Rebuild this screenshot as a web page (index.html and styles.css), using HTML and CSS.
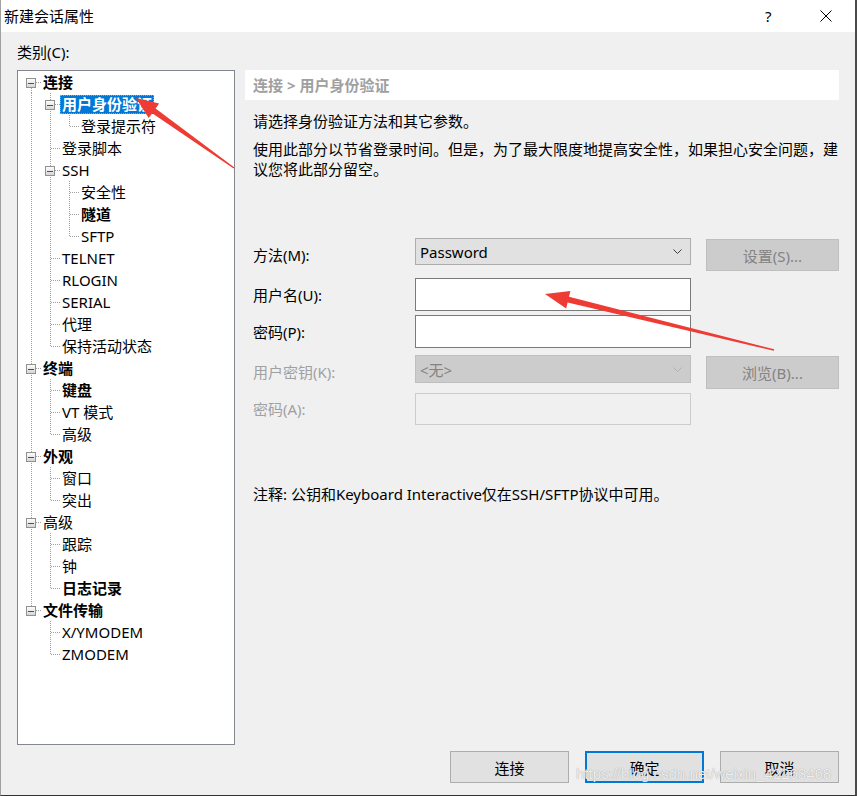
FILE: index.html
```
<!DOCTYPE html>
<html lang="zh-CN">
<head>
  <meta charset="UTF-8" />
  <title>新建会话属性</title>
  <link rel="stylesheet" href="styles.css">
</head>
<body>
  <div class="window">
    <div class="titlebar">
      <span class="title">新建会话属性</span>
      <span class="tb-help">?</span>
      <span class="tb-close">
        <svg width="12" height="12" viewBox="0 0 12 12"><path d="M0.5 0.5L11.5 11.5M11.5 0.5L0.5 11.5" stroke="#000" stroke-width="1" fill="none"/></svg>
      </span>
    </div>

    <div class="content">
      <div class="cat-label">类别(C):</div>

      <div class="main">
        <!-- Arbre des catégories -->
        <div class="tree">
          <div class="row"><span class="c first"><i class="box"></i></span><span class="lbl b">连接</span></div>
          <div class="row"><span class="g v"></span><span class="c tee"><i class="box"></i></span><span class="lbl b sel">用户身份验证</span></div>
          <div class="row"><span class="g v"></span><span class="g v"></span><span class="c end"></span><span class="lbl">登录提示符</span></div>
          <div class="row"><span class="g v"></span><span class="c tee"></span><span class="lbl">登录脚本</span></div>
          <div class="row"><span class="g v"></span><span class="c tee"><i class="box"></i></span><span class="lbl">SSH</span></div>
          <div class="row"><span class="g v"></span><span class="g v"></span><span class="c tee"></span><span class="lbl">安全性</span></div>
          <div class="row"><span class="g v"></span><span class="g v"></span><span class="c tee"></span><span class="lbl b">隧道</span></div>
          <div class="row"><span class="g v"></span><span class="g v"></span><span class="c end"></span><span class="lbl">SFTP</span></div>
          <div class="row"><span class="g v"></span><span class="c tee"></span><span class="lbl">TELNET</span></div>
          <div class="row"><span class="g v"></span><span class="c tee"></span><span class="lbl">RLOGIN</span></div>
          <div class="row"><span class="g v"></span><span class="c tee"></span><span class="lbl">SERIAL</span></div>
          <div class="row"><span class="g v"></span><span class="c tee"></span><span class="lbl">代理</span></div>
          <div class="row"><span class="g v"></span><span class="c end"></span><span class="lbl">保持活动状态</span></div>
          <div class="row"><span class="c tee"><i class="box"></i></span><span class="lbl b">终端</span></div>
          <div class="row"><span class="g v"></span><span class="c tee"></span><span class="lbl b">键盘</span></div>
          <div class="row"><span class="g v"></span><span class="c tee"></span><span class="lbl">VT 模式</span></div>
          <div class="row"><span class="g v"></span><span class="c end"></span><span class="lbl">高级</span></div>
          <div class="row"><span class="c tee"><i class="box"></i></span><span class="lbl b">外观</span></div>
          <div class="row"><span class="g v"></span><span class="c tee"></span><span class="lbl">窗口</span></div>
          <div class="row"><span class="g v"></span><span class="c end"></span><span class="lbl">突出</span></div>
          <div class="row"><span class="c tee"><i class="box"></i></span><span class="lbl">高级</span></div>
          <div class="row"><span class="g v"></span><span class="c tee"></span><span class="lbl">跟踪</span></div>
          <div class="row"><span class="g v"></span><span class="c tee"></span><span class="lbl">钟</span></div>
          <div class="row"><span class="g v"></span><span class="c end"></span><span class="lbl b">日志记录</span></div>
          <div class="row"><span class="c end"><i class="box"></i></span><span class="lbl b">文件传输</span></div>
          <div class="row"><span class="g"></span><span class="c tee"></span><span class="lbl">X/YMODEM</span></div>
          <div class="row"><span class="g"></span><span class="c end"></span><span class="lbl">ZMODEM</span></div>
        </div>

        <!-- Panneau de droite -->
        <div class="panel">
          <div class="crumb">连接 &gt; 用户身份验证</div>
          <p class="intro">请选择身份验证方法和其它参数。</p>
          <p class="desc">使用此部分以节省登录时间。但是，为了最大限度地提高安全性，如果担心安全问题，建议您将此部分留空。</p>

          <div class="form">
            <div class="frow r1">
              <label>方法(M):</label>
              <div class="select">
                <span>Password</span>
                <svg width="9" height="5" viewBox="0 0 9 5"><path d="M0.5 0.5L4.5 4.5L8.5 0.5" stroke="#404040" fill="none"/></svg>
              </div>
              <button class="side-btn" disabled>设置(S)...</button>
            </div>
            <div class="frow r2">
              <label>用户名(U):</label>
              <div class="textbox"></div>
            </div>
            <div class="frow r3">
              <label>密码(P):</label>
              <div class="textbox"></div>
            </div>
            <div class="frow r4 off">
              <label>用户密钥(K):</label>
              <div class="select">
                <span>&lt;无&gt;</span>
                <svg width="9" height="5" viewBox="0 0 9 5"><path d="M0.5 0.5L4.5 4.5L8.5 0.5" stroke="#b0b0b0" fill="none"/></svg>
              </div>
              <button class="side-btn" disabled>浏览(B)...</button>
            </div>
            <div class="frow r5 off">
              <label>密码(A):</label>
              <div class="textbox"></div>
            </div>
          </div>

          <p class="note">注释: 公钥和Keyboard Interactive仅在SSH/SFTP协议中可用。</p>
        </div>
      </div>

      <div class="footer">
        <button class="dbtn">连接</button>
        <button class="dbtn default">确定</button>
        <button class="dbtn">取消</button>
      </div>
    </div>

    <div class="watermark">https://blog.csdn.net/weixin_42263468</div>

    <!-- Flèches rouges d'annotation -->
    <svg class="arrows" width="857" height="796" viewBox="0 0 857 796">
      <polygon points="234.4,167.4 155.6,108.4 159.1,103.5 136,98 148.7,118.1 152.2,113.2 233.6,168.6" fill="#ee3b34"/>
      <polygon points="774.2,349.3 569.0,296.8 570.4,291.0 545,294 566.2,308.4 567.6,302.6 773.8,350.7" fill="#ee3b34"/>
    </svg>
  </div>
</body>
</html>
```

FILE: styles.css
```
body {
  margin: 0;
  font-family: "Noto Sans", "Noto Sans CJK SC", sans-serif;
  font-size: 15px;
  color: #000;
  background: #f0f0f0;
}
.window {
  position: relative;
  width: 857px;
  height: 796px;
  box-sizing: border-box;
  border-left: 1px solid #a0a0a0;
  border-right: 2px solid #4a4a4a;
  border-bottom: 1px solid #333;
  background: #f0f0f0;
  display: flex;
  flex-direction: column;
}
.titlebar {
  height: 32px;
  background: white;
  display: flex;
  align-items: center;
  padding-left: 3px;
}
.title {
  flex: 1;
  line-height: 20px;
}
.tb-help {
  width: 9px;
  margin-right: 46px;
  line-height: 20px;
}
.tb-close {
  display: flex;
  margin-right: 23px;
}
.content {
  flex: 1;
  display: flex;
  flex-direction: column;
  padding: 0 16px;
}
.cat-label {
  height: 38px;
  box-sizing: border-box;
  padding-top: 10px;
  line-height: 20px;
}
.main {
  display: flex;
  height: 675px;
}
/* Tree */
.tree {
  --dot-v: repeating-linear-gradient(to bottom, #a0a0a0 0 1px, transparent 1px 2px);
  --dot-h: repeating-linear-gradient(to right, #a0a0a0 0 1px, transparent 1px 2px);
  width: 218px;
  box-sizing: border-box;
  border: 1px solid #828790;
  background: white;
  padding: 0 0 0 4px;
}
.row {
  height: 22px;
  display: flex;
  align-items: center;
}
.g, .c {
  width: 19px;
  height: 22px;
  flex: none;
  display: flex;
  align-items: center;
  justify-content: center;
}
.g.v {
  background: var(--dot-v) 9px 0 / 1px 22px no-repeat;
}
.c.tee {
  background: var(--dot-h) 10px 11px / 9px 1px no-repeat, var(--dot-v) 9px 0 / 1px 22px no-repeat;
}
.c.end {
  background: var(--dot-h) 10px 11px / 9px 1px no-repeat, var(--dot-v) 9px 0 / 1px 12px no-repeat;
}
.c.first {
  background: var(--dot-h) 10px 11px / 9px 1px no-repeat, var(--dot-v) 9px 11px / 1px 11px no-repeat;
}
.box {
  width: 8px;
  height: 8px;
  margin: 2px 1px 0 0;
  border: 1px solid #919191;
  background: linear-gradient(#3b4f8c, #3b4f8c) center / 6px 1px no-repeat, linear-gradient(#fdfdfd, #d6d6d6);
}
.lbl {
  height: 19px;
  line-height: 19px;
  padding: 0 2px;
  white-space: nowrap;
}
.lbl.b {
  font-weight: bold;
}
.lbl.sel {
  background: #0078d7;
  color: white;
  outline: 1px dotted #ff8a2a;
  outline-offset: -1px;
}
/* Right panel */
.panel {
  flex: 1;
  margin-left: 10px;
}
.crumb {
  height: 30px;
  line-height: 30px;
  background: white;
  padding-left: 8px;
  font-weight: bold;
  color: #a0a0a0;
}
.intro, .desc, .note {
  margin: 0;
  padding-left: 8px;
  line-height: 20px;
}
.intro {
  margin-top: 11px;
}
.desc {
  margin-top: 8px;
  margin-right: -1px;
}
.form {
  margin-top: 59px;
  padding-left: 8px;
}
.frow {
  display: flex;
  align-items: center;
}
.frow label {
  width: 162px;
  line-height: 20px;
}
.frow.off label {
  color: #a0a0a0;
}
.select, .textbox {
  width: 276px;
  box-sizing: border-box;
}
.select {
  display: flex;
  align-items: center;
  justify-content: space-between;
  padding: 0 8px 0 4px;
  background: #e1e1e1;
  border: 1px solid #adadad;
  align-self: flex-start;
}
.textbox {
  height: 100%;
  background: white;
  border: 1px solid #7a7a7a;
}
.off .select {
  background: #cccccc;
  border-color: #bfbfbf;
  color: #838383;
}
.off .textbox {
  background: #f0f0f0;
  border-color: #cccccc;
}
.side-btn {
  width: 133px;
  margin-left: 15px;
  padding: 0;
  align-self: flex-end;
  font: inherit;
  color: #838383;
  background: #cccccc;
  border: 1px solid #bfbfbf;
}
.r1 { height: 33px; }
.r1 .select { height: 27px; }
.r1 .side-btn { height: 32px; }
.r2 { height: 33px; margin-top: 7px; }
.r3 { height: 33px; margin-top: 4px; }
.r4 { height: 34px; margin-top: 7px; }
.r4 .select { height: 28px; }
.r4 .side-btn { height: 33px; }
.r5 { height: 32px; margin-top: 4px; }
.note {
  margin-top: 59px;
}
/* Footer */
.footer {
  display: flex;
  justify-content: flex-end;
  gap: 16px;
  margin-top: 6px;
}
.dbtn {
  width: 119px;
  height: 32px;
  padding: 0;
  font: inherit;
  color: #000;
  background: #e1e1e1;
  border: 1px solid #adadad;
}
.dbtn.default {
  border: 2px solid #0078d7;
}
.watermark {
  position: absolute;
  left: 575px;
  top: 765px;
  font-family: "Liberation Sans", sans-serif;
  font-size: 15px;
  color: rgba(255, 255, 255, 0.85);
  text-shadow: 0 0 1px #8a8a8a;
  pointer-events: none;
}
.arrows {
  position: absolute;
  left: -1px;
  top: 0;
  pointer-events: none;
}
```
